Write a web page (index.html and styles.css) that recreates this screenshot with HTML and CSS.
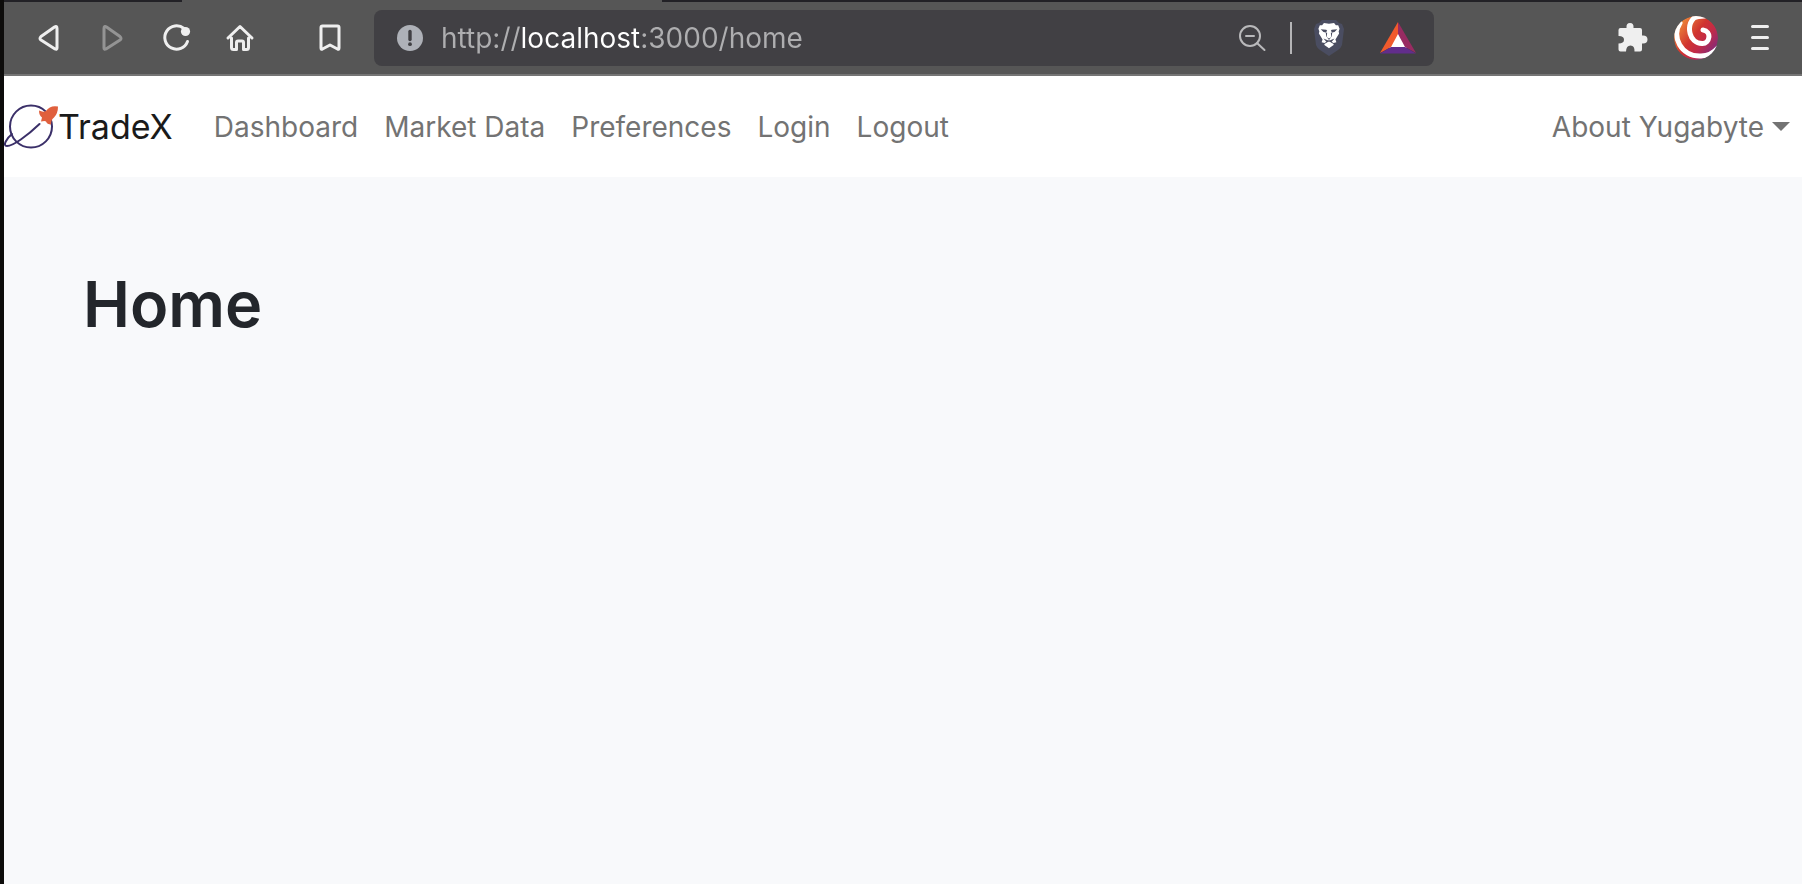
FILE: index.html
```html
<!DOCTYPE html>
<html lang="en">
<head>
<meta charset="utf-8">
<meta name="viewport" content="width=device-width, initial-scale=1">
<title>TradeX</title>
<link rel="stylesheet" href="styles.css">
</head>
<body>
<div class="window">
  <div class="tabs"><div class="tab-inactive"></div><div class="tab-active"></div><div class="tab-rest"></div></div>
  <div class="toolbar">
    <button class="tool" type="button" aria-label="Back">
      <svg class="icon" viewBox="0 0 48 48"><path d="M33 14.5V34q0 2-2 1L17 26q-2-1.500 0-3.500L30.500 13q2.500-1.500 2.500 1.500Z" /></svg>
    </button>
    <button class="tool tool-disabled" type="button" aria-label="Forward" disabled>
      <svg class="icon" viewBox="0 0 48 48"><path d="M16 14.500V34q0 2 2 1L32 26q2-1.500 0-3.500L18.500 13Q16 11.500 16 14.500Z" /></svg>
    </button>
    <button class="tool" type="button" aria-label="Reload">
      <svg class="icon" viewBox="0 0 48 48"><path d="M32 14.500A11.700 11.700 0 1 0 35.500 27.500" /><circle class="solid" cx="33.500" cy="17.500" r="4.600" /></svg>
    </button>
    <button class="tool" type="button" aria-label="Home">
      <svg class="icon" viewBox="0 0 48 48"><path d="M12 24L24 12.500L36 24M15.500 24V33.500q0 2 2 2h3V28.500q0-1.500 1.500-1.500h4q1.500 0 1.500 1.500v7h3q2 0 2-2V24" /></svg>
    </button>
    <button class="tool tool-bookmark" type="button" aria-label="Bookmark">
      <svg class="icon" viewBox="0 0 48 48"><path d="M16.500 12h15q1.500 0 1.500 1.500V34q0 2-1.500 1L24 31l-7.500 4q-1.500 1-1.500-1V13.500q0-1.500 1.500-1.500Z" /></svg>
    </button>
    <form class="address">
      <svg class="info" viewBox="0 0 26 26"><circle cx="13" cy="13" r="13" fill="#aeb1b8" /><path d="M13 6.500v8" stroke="#414044" stroke-width="3.400" stroke-linecap="round" /><circle cx="13" cy="19.200" r="1.900" fill="#414044" /></svg>
      <input class="url" type="text" aria-label="Address" value="http://localhost:3000/home">
      <button class="address-tool" type="button" aria-label="Zoom out">
        <svg class="glyph" viewBox="0 0 28 28" fill="none" stroke="#b9b9bb" stroke-width="2" stroke-linecap="round"><circle cx="11" cy="12" r="10" /><path d="M18 19l7.500 7M7 12h8" /></svg>
      </button>
      <span class="divider"></span>
      <button class="address-tool shield" type="button" aria-label="Brave Shields">
        <svg class="lion" viewBox="0 0 30 36">
          <path fill="#4a4d61" d="M8 0h14l3 3 3 1 2 5-2 16q-1 3-4 5l-6 4-3 2-3-2-6-4q-3-2-4-5L0 9l2-5 3-1Z" />
          <g transform="translate(1.200 1.500) scale(0.920)">
            <path fill="#fff" d="M9.500 1.500l5.500 1 5.500-1 2 2.500 2.500 0 1.500 4-1 3 .5 2-4 6.500 1 3-3 1-5-3-5 3-3-1 1-3L4 13l.5-2-1-3 1.500-4 2.500 0ZM15 21.500l5 3v1L15 29l-5-3.500v-1Z" />
            <path fill="#4a4d61" d="M6 8.500l6 .5 1 1-1.500 2 .5 4.500 3 2 3-2 .5-4.500-1.500-2 1-1L24 8.500l-3 3-4 .8.5 4.500L15 20l-2.500-3.200.5-4.500L9 11.500ZM9 18.500l6 2.500 6-2.500-3.500 4-2.500-1-2.500 1Z" />
          </g>
        </svg>
      </button>
      <button class="address-tool rewards" type="button" aria-label="Brave Rewards">
        <svg class="triangle" viewBox="0 0 36 32"><path fill="#fff" d="M18 10l9 16H9Z" /><path fill="#f15a2c" d="M18 0v12L11 25 0 31Z" /><path fill="#982b62" d="M18 0v12l7 13 11 6Z" /><path fill="#622d8c" d="M11 25h14l11 6.500H0Z" /></svg>
      </button>
    </form>
    <button class="tool" type="button" aria-label="Extensions">
      <svg class="icon" viewBox="0 0 48 48"><path class="solid" d="M11 14h7.500q-.5-5 3.500-5t3.500 5H32q2 0 2 2v5.500q5.500-.5 5.500 4T34 29.500V35.500q0 2-2 2h-5.500q.3-6-4-6t-4.500 6H12.500q-2 0-2-2v-6q5.500 0 5.500-3.800T10.500 22V16q0-2 2-2Z" /></svg>
    </button>
    <button class="tool" type="button" aria-label="Profile">
      <svg class="icon" viewBox="0 0 48 48">
        <defs>
          <linearGradient id="swirl" x1="0" y1="0.100" x2="1" y2="0.900"><stop offset="0" stop-color="#f6a03b" /><stop offset="0.450" stop-color="#d0332f" /><stop offset="0.650" stop-color="#c12a49" /><stop offset="1" stop-color="#6b2a8d" /></linearGradient>
          <clipPath id="disc"><circle cx="24" cy="24" r="22" /></clipPath>
        </defs>
        <g clip-path="url(#disc)"><circle class="disc" cx="24" cy="24" r="22" fill="url(#swirl)" /><path class="swirl" d="M31 16C40 17 38 30 30 29.500C17 29 14 12 22 4Q25 2 33 2" /><path class="swirl" d="M8 9C-1 22 9 43 29 42Q39 42 46 34" /></g>
      </svg>
    </button>
    <button class="tool" type="button" aria-label="Menu">
      <svg class="icon" viewBox="0 0 48 48"><path d="M16.500 12.500h15M16.500 23.500h15M16.500 34.500h15" /></svg>
    </button>
  </div>
  <nav class="navbar">
    <a class="brand" href="#">
      <svg class="logo" viewBox="0 0 54 46"><g fill="none" stroke="#3b3069" stroke-width="2"><circle cx="27" cy="22.500" r="21" /><path d="M35.500 20C23 32 9 42 3 42C-2 42 3 34 8 30" stroke-linecap="round" /></g><path fill="#e0603d" d="M54 2.500Q46 1 42 7q-3 1.500-7-.5 0 5 3 7l-1 4q4-1 5 0 1 3 5 3 0-5 3-7 4-4 4-11Z" /></svg>
      <span>TradeX</span>
    </a>
    <a class="link" href="#">Dashboard</a>
    <a class="link" href="#">Market Data</a>
    <a class="link" href="#">Preferences</a>
    <a class="link" href="#">Login</a>
    <a class="link" href="#">Logout</a>
    <button class="link about" type="button">About Yugabyte<span class="caret"></span></button>
  </nav>
  <main class="content"><h1 class="title">Home</h1></main>
</div>
</body>
</html>
```
FILE: styles.css
```css
* { box-sizing: border-box; }
body {
  margin: 0;
  font-family: Inter, "Liberation Sans", sans-serif;
  background: #f8f9fb;
}
button {
  border: 0;
  padding: 0;
  background: none;
  font: inherit;
}
svg { display: block; flex: none; }
.window {
  display: flex;
  flex-direction: column;
  min-height: 100vh;
  border-left: 4px solid #0d0c0b;
}
.tabs {
  display: flex;
  height: 2px;
  background: #565656;
}
.tab-inactive { width: 178px; background: #222126; }
.tab-active { width: 480px; }
.tab-rest { flex: 1; background: #222126; }
.toolbar {
  display: flex;
  align-items: center;
  height: 74px;
  padding: 0 10px 0 12px;
  background: #565656;
  border-bottom: 2px solid #757575;
}
.tool {
  display: flex;
  flex: none;
  align-items: center;
  justify-content: center;
  width: 64px;
  height: 56px;
  color: #efefef;
}
.tool-disabled { color: #949494; }
.tool-bookmark { margin: 0 12px 0 26px; }
.icon {
  width: 48px;
  height: 48px;
  fill: none;
  stroke: currentColor;
  stroke-width: 3;
  stroke-linecap: round;
  stroke-linejoin: round;
}
.icon .solid { fill: currentColor; stroke: none; }
.icon .disc { stroke: none; }
.icon .swirl { stroke: #fff; stroke-width: 5; }
.address {
  display: flex;
  flex: 1;
  align-items: center;
  height: 56px;
  min-width: 0;
  margin-right: 166px;
  padding: 0 18px 0 23px;
  background: #414044;
  border-radius: 8px;
}
.info { width: 26px; height: 26px; }
.url {
  flex: 1;
  min-width: 0;
  height: 40px;
  margin-left: 18px;
  padding: 0;
  border: 0;
  outline: 0;
  font: inherit;
  font-size: 28px;
  color: transparent;
  background: linear-gradient(90deg, #aeaeb0 79px, #fff 79px 198px, #aeaeb0 198px);
  background-clip: text;
}
.address-tool { display: flex; }
.glyph { width: 28px; height: 28px; }
.divider {
  width: 2px;
  height: 32px;
  margin: 0 22px 0 23px;
  background: #b5b5b7;
}
.lion { width: 30px; height: 36px; }
.rewards { margin-left: 36px; }
.triangle { width: 36px; height: 32px; }
.navbar {
  display: flex;
  align-items: center;
  height: 101px;
  padding-right: 12px;
  background: #fff;
}
.brand {
  display: flex;
  align-items: center;
  margin-right: 28px;
  font-size: 34px;
  color: #1a1a1a;
  text-decoration: none;
}
.logo { width: 54px; height: 46px; }
.link {
  padding: 0 13px;
  font-size: 28px;
  line-height: 42px;
  color: #737373;
  text-decoration: none;
  white-space: nowrap;
}
.about {
  display: flex;
  align-items: center;
  gap: 8px;
  margin-left: auto;
  padding-right: 0;
}
.caret {
  border: 9px solid transparent;
  border-top-color: currentColor;
  border-bottom: 0;
}
.content { flex: 1; padding: 87px 79px; }
.title {
  margin: 0;
  font-size: 63px;
  font-weight: 600;
  line-height: 80px;
  color: #23262b;
}
```
